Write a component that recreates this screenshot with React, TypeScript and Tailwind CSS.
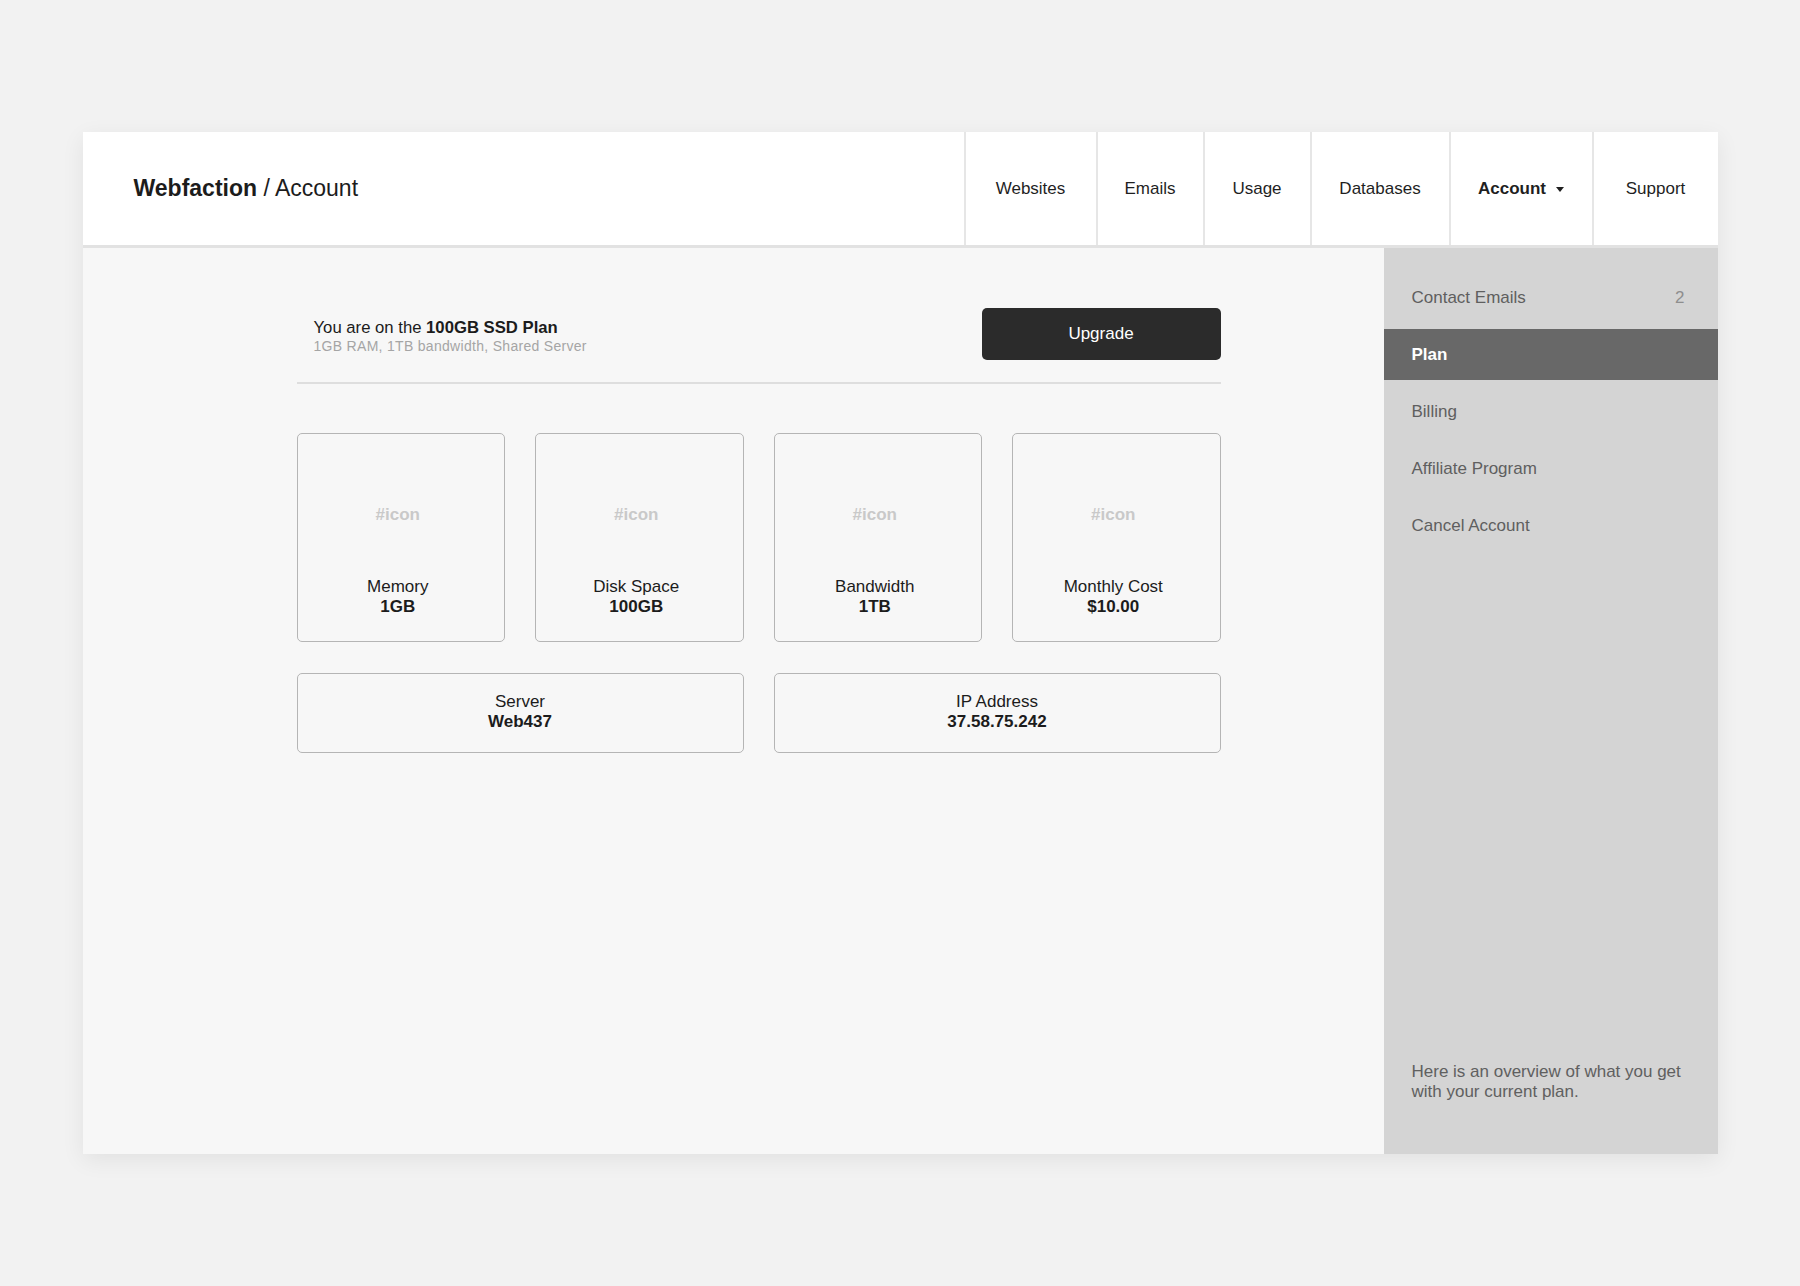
const navItems = [
  { name: "Websites", width: "w-[132px]" },
  { name: "Emails", width: "w-[107px]" },
  { name: "Usage", width: "w-[107px]" },
  { name: "Databases", width: "w-[139px]" },
  { name: "Account", width: "w-[143px]", active: true },
  { name: "Support", width: "w-[126px]" },
];

const sideLinks = [
  { name: "Contact Emails", count: 2 },
  { name: "Plan", active: true },
  { name: "Billing" },
  { name: "Affiliate Program" },
  { name: "Cancel Account" },
];

const stats = [
  { label: "Memory", value: "1GB" },
  { label: "Disk Space", value: "100GB" },
  { label: "Bandwidth", value: "1TB" },
  { label: "Monthly Cost", value: "$10.00" },
];

const details = [
  { label: "Server", value: "Web437" },
  { label: "IP Address", value: "37.58.75.242" },
];

function Header() {
  return (
    <header className="flex h-[116px] items-stretch border-b-[3px] border-[#e2e2e2] bg-white">
      <a href="#" className="flex items-center pl-[51px] text-[23px] text-[#1c1c1c]">
        <span className="font-bold">Webfaction</span>
        <span className="whitespace-pre"> / Account</span>
      </a>
      <nav className="ml-auto flex">
        {navItems.map((item) => (
          <a
            key={item.name}
            href="#"
            className={`flex items-center justify-center gap-[10px] border-l-2 border-[#e6e6e6] text-[17px] text-[#1f1f1f] ${item.width} ${
              item.active ? "font-bold" : ""
            }`}
          >
            {item.name}
            {item.active && (
              <svg width="8" height="5" viewBox="0 0 8 5" className="mt-[1px]">
                <path d="M0 0h8L4 5z" fill="#1f1f1f" />
              </svg>
            )}
          </a>
        ))}
      </nav>
    </header>
  );
}

function StatCard({ label, value }: { label: string; value: string }) {
  return (
    <div className="flex h-[209px] flex-col items-center rounded-[5px] border-[1.5px] border-[#b5b5b5] pr-[6px] pt-[71px]">
      <span className="text-[17px] font-bold leading-5 text-[#c9c9c9]">#icon</span>
      <span className="mt-[52px] text-[17px] leading-5 text-[#1c1c1c]">{label}</span>
      <span className="text-[17px] font-bold leading-5 text-[#1c1c1c]">{value}</span>
    </div>
  );
}

function Sidebar() {
  return (
    <aside className="flex w-[334px] flex-col justify-between bg-[#d4d4d4] pb-[52px] pt-[24px]">
      <ul className="flex flex-col gap-[6px]">
        {sideLinks.map((link) => (
          <li key={link.name}>
            <a
              href="#"
              className={`flex h-[51px] items-center justify-between pl-[28px] pr-[33px] text-[17px] ${
                link.active ? "bg-[#686868] font-bold text-white" : "text-[#5f5f5f]"
              }`}
            >
              {link.name}
              {link.count && <span className="text-[#8e8e8e]">{link.count}</span>}
            </a>
          </li>
        ))}
      </ul>
      <p className="px-[28px] text-[17px] leading-5 text-[#606060]">
        Here is an overview of what you get with your current plan.
      </p>
    </aside>
  );
}

export default function App() {
  return (
    <div
      className="flex min-h-screen items-center justify-center bg-[#f2f2f2]"
      style={{ fontFamily: '"Liberation Sans", Arial, sans-serif' }}
    >
      <div className="flex h-[1022px] w-[1635px] flex-col bg-[#f7f7f7] shadow-[0_6px_22px_rgba(0,0,0,0.07)]">
        <Header />
        <div className="flex flex-1">
          <main className="flex-1 pl-[214px] pt-[60px]">
            <div className="w-[924px]">
              {/* current plan summary */}
              <div className="flex items-center justify-between border-b-2 border-[#dedede] pb-[22px] pl-[17px]">
                <div className="flex flex-col pt-[5px]">
                  <p className="text-[16.7px] leading-[19px] text-[#1c1c1c]">
                    You are on the <span className="font-bold">100GB SSD Plan</span>
                  </p>
                  <p className="text-[14px] leading-[18px] tracking-[0.3px] text-[#a5a5a5]">
                    1GB RAM, 1TB bandwidth, Shared Server
                  </p>
                </div>
                <button
                  type="button"
                  className="h-[52px] w-[239px] rounded-[5px] bg-[#2b2b2b] text-[17px] text-white"
                >
                  Upgrade
                </button>
              </div>

              <div className="mt-[49px] grid grid-cols-4 gap-x-[30px] gap-y-[31px]">
                {stats.map((s) => (
                  <StatCard key={s.label} label={s.label} value={s.value} />
                ))}
                {details.map((d) => (
                  <div
                    key={d.label}
                    className="col-span-2 flex h-[80px] flex-col items-center justify-center rounded-[5px] border-[1.5px] border-[#b5b5b5] pb-[3px]"
                  >
                    <span className="text-[17px] leading-5 text-[#1c1c1c]">{d.label}</span>
                    <span className="text-[17px] font-bold leading-5 text-[#1c1c1c]">{d.value}</span>
                  </div>
                ))}
              </div>
            </div>
          </main>
          <Sidebar />
        </div>
      </div>
    </div>
  );
}
